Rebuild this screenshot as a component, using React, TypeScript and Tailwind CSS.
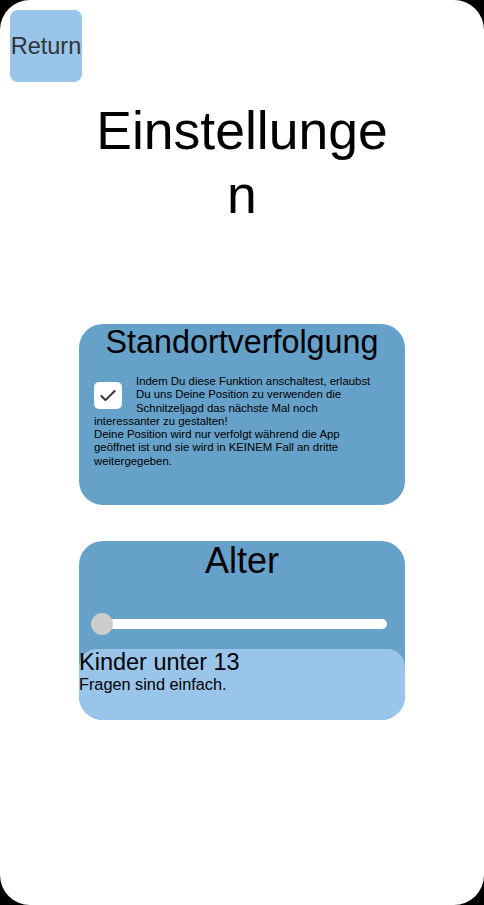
import { Check } from 'lucide-react'

export default function App() {
  return (
    <div className="w-[484px] h-[905px] bg-black" style={{ fontFamily: '"Liberation Sans", Arial, sans-serif' }}>
      <div className="w-full h-full bg-white rounded-[30px] flex flex-col">
        <div className="pl-[10px] pt-[10px]">
          <button className="w-[72px] h-[72px] bg-[#99c5ea] rounded-[8px] text-[23.5px] text-[#333333] flex items-center justify-center pt-[1px]">
            Return
          </button>
        </div>

        <h1 className="self-center w-[300px] mt-[17px] text-center text-[53.5px] leading-[64px] text-black [overflow-wrap:anywhere]">
          Einstellungen
        </h1>

        <div className="self-center mt-[97px] w-[326px] h-[181px] bg-[#65a1c9] rounded-[24px] overflow-hidden">
          <h2 className="text-center text-[32.3px] leading-[37px] text-black">Standortverfolgung</h2>
          <div className="mt-[14px] pl-[15px] pr-[27px] text-[11.4px] leading-[13.3px] text-black">
            <div className="float-left mr-[14px] mt-[7px] w-[28px] h-[27px] bg-white rounded-[5px] flex items-center justify-center">
              <Check className="w-[20px] h-[20px] text-[#333333]" strokeWidth={2.4} />
            </div>
            Indem Du diese Funktion anschaltest, erlaubst Du uns Deine Position zu verwenden die Schnitzeljagd das nächste Mal noch interessanter zu gestalten!
            <br />
            Deine Position wird nur verfolgt während die App geöffnet ist und sie wird in KEINEM Fall an dritte weitergegeben.
          </div>
        </div>

        <div className="self-center mt-[36px] w-[326px] h-[179px] bg-[#65a1c9] rounded-[24px] flex flex-col overflow-hidden">
          <h2 className="text-center text-[36px] leading-[41px] -mt-[1px] text-black">Alter</h2>
          <div className="relative mt-[32px] h-[22px] ml-[12px] mr-[18px] flex items-center">
            <div className="w-full h-[10px] bg-white rounded-full" />
            <div className="absolute left-0 top-0 w-[22px] h-[22px] rounded-full bg-[#cdcdca]" />
          </div>
          <div className="mt-[14px] flex-1 bg-[#99c5ea] rounded-[18px] text-black">
            <div className="text-[23.5px] leading-[26px]">Kinder unter 13</div>
            <div className="text-[16.3px] leading-[18px]">Fragen sind einfach.</div>
          </div>
        </div>
      </div>
    </div>
  )
}
